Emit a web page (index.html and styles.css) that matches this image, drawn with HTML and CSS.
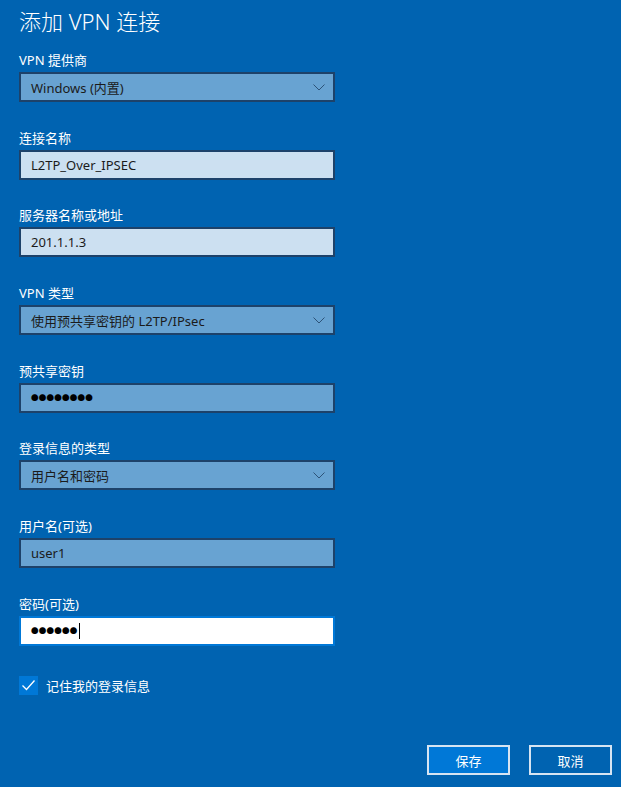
FILE: index.html
```html
<!DOCTYPE html>
<html lang="zh-CN">
<head>
<meta charset="utf-8">
<title>添加 VPN 连接</title>
<link rel="stylesheet" href="styles.css">
</head>
<body>
<div class="page">
  <h1 class="title">添加 VPN 连接</h1>

  <div class="field">
    <div class="label">VPN 提供商</div>
    <div class="box select"><span class="val">Windows (内置)</span>
      <svg class="chev" width="12" height="7" viewBox="0 0 12 7"><polyline points="0.5,0.5 6,6 11.5,0.5" fill="none" stroke="#2d5378" stroke-width="1"/></svg>
    </div>
  </div>

  <div class="field">
    <div class="label">连接名称</div>
    <div class="box light"><span class="val">L2TP_Over_IPSEC</span></div>
  </div>

  <div class="field">
    <div class="label">服务器名称或地址</div>
    <div class="box light"><span class="val">201.1.1.3</span></div>
  </div>

  <div class="field">
    <div class="label">VPN 类型</div>
    <div class="box select"><span class="val">使用预共享密钥的 L2TP/IPsec</span>
      <svg class="chev" width="12" height="7" viewBox="0 0 12 7"><polyline points="0.5,0.5 6,6 11.5,0.5" fill="none" stroke="#2d5378" stroke-width="1"/></svg>
    </div>
  </div>

  <div class="field">
    <div class="label">预共享密钥</div>
    <div class="box select"><span class="val dots">●●●●●●●●</span></div>
  </div>

  <div class="field">
    <div class="label">登录信息的类型</div>
    <div class="box select"><span class="val">用户名和密码</span>
      <svg class="chev" width="12" height="7" viewBox="0 0 12 7"><polyline points="0.5,0.5 6,6 11.5,0.5" fill="none" stroke="#2d5378" stroke-width="1"/></svg>
    </div>
  </div>

  <div class="field">
    <div class="label">用户名(可选)</div>
    <div class="box select"><span class="val">user1</span></div>
  </div>

  <div class="field">
    <div class="label">密码(可选)</div>
    <div class="box focus"><span class="val dots">●●●●●●</span><span class="caret"></span></div>
  </div>

  <div class="check-row">
    <span class="checkbox">
      <svg width="19" height="19" viewBox="0 0 19 19"><polyline points="3.5,9.5 7.5,13.5 15.5,4.5" fill="none" stroke="#ffffff" stroke-width="1.3"/></svg>
    </span>
    <span class="check-label">记住我的登录信息</span>
  </div>

  <div class="actions">
    <div class="btn primary">保存</div>
    <div class="btn">取消</div>
  </div>
</div>
</body>
</html>
```
FILE: styles.css
```css
html, body {
  margin: 0;
  padding: 0;
  background: #0063b1;
}
body {
  font-family: "Noto Sans", "Noto Sans CJK SC", sans-serif;
  color: #ffffff;
}
.page {
  width: 621px;
  height: 787px;
  box-sizing: border-box;
  padding: 6px 9px 12px 19px;
  display: flex;
  flex-direction: column;
}
.title {
  margin: 0 0 15px 0;
  font-size: 22px;
  line-height: 30px;
  font-weight: 300;
  letter-spacing: 0;
}
.field {
  display: flex;
  flex-direction: column;
  margin-bottom: 26.7px;
}
.label {
  font-size: 13px;
  line-height: 18px;
  margin-bottom: 3px;
}
.box {
  width: 316px;
  height: 30px;
  box-sizing: border-box;
  border: 2px solid #1d426a;
  display: flex;
  align-items: center;
  padding: 0 8px 0 10px;
  color: #1b1b1b;
  font-size: 13px;
}
.box .val {
  flex: 1;
  white-space: nowrap;
}
.select {
  background: #68a3d2;
}
.light {
  background: #cce0f1;
}
.focus {
  background: #ffffff;
  border-color: #0078d7;
}
.focus .val {
  flex: none;
}
.dots {
  font-size: 7.5px;
  letter-spacing: 0.25px;
  color: #000;
}
.caret {
  width: 1px;
  height: 16px;
  background: #000;
  margin-left: 1px;
}
.chev {
  flex: none;
  margin-right: 0;
}
.check-row {
  display: flex;
  align-items: center;
  margin-top: 3px;
}
.checkbox {
  width: 19px;
  height: 19px;
  background: #0078d7;
  display: flex;
}
.check-label {
  font-size: 13px;
  margin-left: 8px;
}
.actions {
  margin-top: auto;
  display: flex;
  justify-content: flex-end;
  gap: 19px;
}
.btn {
  width: 83px;
  height: 30px;
  box-sizing: border-box;
  border: 2px solid #d6e4f2;
  display: flex;
  align-items: center;
  justify-content: center;
  font-size: 13px;
  color: #ffffff;
}
.btn.primary {
  background: #0078d7;
}
```
